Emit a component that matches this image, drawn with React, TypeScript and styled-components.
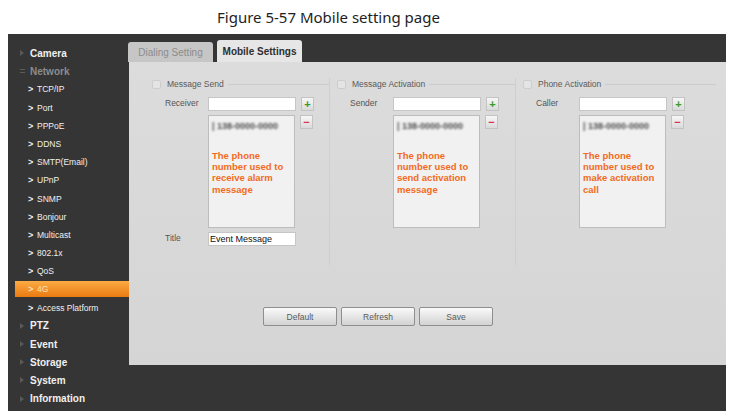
import React from 'react';
import styled, { createGlobalStyle } from 'styled-components';

const GlobalStyle = createGlobalStyle`
  html, body {
    margin: 0;
    padding: 0;
    background: #ffffff;
  }
  body {
    font-family: 'Liberation Sans', Arial, sans-serif;
  }
`;

const Page = styled.div`
  width: 738px;
  height: 414px;
  overflow: hidden;
`;

const Caption = styled.div`
  height: 34px;
  display: flex;
  align-items: center;
  padding-left: 217px;
  font-family: 'Noto Sans', 'Open Sans', sans-serif;
  font-size: 15px;
  color: #1e1e1e;
`;

const Screen = styled.div`
  margin-left: 8px;
  width: 718px;
  height: 377px;
  background: #353535;
  display: grid;
  grid-template-columns: 121px 1fr;
`;

const Sidebar = styled.nav`
  padding-top: 11px;
  display: flex;
  flex-direction: column;
  gap: 2.2px;
`;

const SideItem = styled.div<{ $sub?: boolean; $active?: boolean; $muted?: boolean }>`
  height: 16px;
  margin-left: 7px;
  display: flex;
  align-items: center;
  padding-left: ${p => (p.$sub ? '13px' : '5px')};
  font-size: ${p => (p.$sub ? '8.5px' : '10px')};
  font-weight: ${p => (p.$sub ? 'normal' : 'bold')};
  color: ${p => (p.$active ? '#ffe0b8' : p.$muted ? '#8c8c8c' : '#f0f0f0')};
  background: ${p => (p.$active ? 'linear-gradient(#fbab45, #ea7a10)' : 'transparent')};
`;

const Marker = styled.span<{ $open?: boolean }>`
  width: 5px;
  margin-right: 5px;
  display: inline-flex;
  align-items: center;
  &::before {
    content: '';
    display: block;
    ${p =>
      p.$open
        ? 'width: 5px; height: 2px; border-top: 1px solid #5c5c5c; border-bottom: 1px solid #5c5c5c;'
        : 'width: 0; height: 0; border-top: 3px solid transparent; border-bottom: 3px solid transparent; border-left: 4px solid #595959;'}
  }
`;

const Chevron = styled.span`
  width: 9px;
  font-weight: bold;
  font-size: 9px;
`;

const Main = styled.div`
  display: flex;
  flex-direction: column;
`;

const TabBar = styled.div`
  height: 28px;
  display: flex;
  align-items: flex-end;
  gap: 4px;
  margin-left: -1px;
`;

const Tab = styled.div<{ $active?: boolean }>`
  width: 85px;
  height: ${p => (p.$active ? '22px' : '20px')};
  border-radius: 3px 3px 0 0;
  display: flex;
  align-items: center;
  justify-content: center;
  font-size: 10px;
  font-weight: ${p => (p.$active ? 'bold' : 'normal')};
  color: ${p => (p.$active ? '#2e2e2e' : '#8c8c8c')};
  background: ${p => (p.$active ? '#e6e6e6' : '#c6c6c6')};
`;

const Panel = styled.section`
  height: 303px;
  background: linear-gradient(#dcdcdc, #d5d5d5);
  padding: 16px 6px 0 19px;
  box-sizing: border-box;
`;

const Columns = styled.div`
  height: 187px;
  display: grid;
  grid-template-columns: 185px 186px 1fr;
`;

const Fieldset = styled.div`
  margin-right: 3px;
  border-right: 1px solid #cfcfcf;
  display: flex;
  flex-direction: column;
  gap: 4px;
  &:last-child {
    border-right-color: transparent;
  }
`;

const Legend = styled.div`
  height: 12px;
  margin-bottom: 3px;
  display: flex;
  align-items: center;
  font-size: 8.5px;
  color: #5a5a5a;
`;

const Check = styled.span`
  width: 7px;
  height: 7px;
  margin: 0 6px 0 4px;
  border: 1px solid #cdcdcd;
  border-radius: 2px;
  background: #e4e4e4;
`;

const LegendLine = styled.span`
  flex: 1;
  height: 1px;
  margin-left: 4px;
  background: #cbcbcb;
`;

const Row = styled.div`
  display: flex;
  align-items: flex-start;
  padding-left: 17px;
  gap: 5px;
`;

const Label = styled.span`
  width: 38px;
  height: 14px;
  line-height: 12px;
  font-size: 8.5px;
  color: #555555;
`;

const TextBox = styled.div`
  width: 85px;
  height: 12px;
  border: 1px solid #c6c6c6;
  background: #ffffff;
  font-size: 9px;
  line-height: 12px;
  padding-left: 1px;
  color: #111111;
  box-sizing: content-box;
`;

const ListBox = styled.div`
  width: 79px;
  height: 103px;
  padding: 4px 3px;
  border: 1px solid #bdbdbd;
  background: #f1f1f1;
`;

const Entry = styled.div`
  height: 12px;
  font-size: 9px;
  font-weight: bold;
  line-height: 12px;
  color: #4a4a4a;
  filter: blur(0.9px);
  white-space: nowrap;
`;

const Note = styled.div`
  margin-top: 18px;
  font-size: 9.5px;
  line-height: 11.2px;
  font-weight: bold;
  color: #f26b21;
`;

const SideButton = styled.span<{ $minus?: boolean }>`
  width: 11px;
  height: 12px;
  border: 1px solid #c3c3c3;
  background: linear-gradient(#f7f7f7, #dadada);
  display: flex;
  align-items: center;
  justify-content: center;
  font-size: 11px;
  font-weight: bold;
  line-height: 1;
  color: ${p => (p.$minus ? '#d8344f' : '#3b9a2a')};
`;

const Actions = styled.div`
  margin-top: 42px;
  padding-left: 115px;
  display: flex;
  gap: 4px;
`;

const Button = styled.button`
  width: 74px;
  height: 19px;
  padding: 0;
  border: 1px solid #8e8e8e;
  border-radius: 2px;
  background: linear-gradient(#fafafa, #d2d2d2);
  font-family: 'Liberation Sans', Arial, sans-serif;
  font-size: 8.5px;
  color: #5a5a5a;
`;

const Footer = styled.div`
  flex: 1;
`;

type NavItem = { label: string; sub?: boolean; active?: boolean; muted?: boolean; open?: boolean };

const navItems: NavItem[] = [
  { label: 'Camera' },
  { label: 'Network', muted: true, open: true },
  { label: 'TCP/IP', sub: true },
  { label: 'Port', sub: true },
  { label: 'PPPoE', sub: true },
  { label: 'DDNS', sub: true },
  { label: 'SMTP(Email)', sub: true },
  { label: 'UPnP', sub: true },
  { label: 'SNMP', sub: true },
  { label: 'Bonjour', sub: true },
  { label: 'Multicast', sub: true },
  { label: '802.1x', sub: true },
  { label: 'QoS', sub: true },
  { label: '4G', sub: true, active: true },
  { label: 'Access Platform', sub: true },
  { label: 'PTZ' },
  { label: 'Event' },
  { label: 'Storage' },
  { label: 'System' },
  { label: 'Information' },
];

type Group = { title: string; field: string; entry: string; note: string[]; withTitle?: boolean };

const groups: Group[] = [
  {
    title: 'Message Send',
    field: 'Receiver',
    entry: '| 138-0000-0000',
    note: ['The phone', 'number used to', 'receive alarm', 'message'],
    withTitle: true,
  },
  {
    title: 'Message Activation',
    field: 'Sender',
    entry: '| 138-0000-0000',
    note: ['The phone', 'number used to', 'send activation', 'message'],
  },
  {
    title: 'Phone Activation',
    field: 'Caller',
    entry: '| 138-0000-0000',
    note: ['The phone', 'number used to', 'make activation', 'call'],
  },
];

const NumberGroup = ({ group }: { group: Group }) => (
  <Fieldset>
    <Legend>
      <Check />
      {group.title}
      <LegendLine />
    </Legend>
    <Row>
      <Label>{group.field}</Label>
      <TextBox />
      <SideButton>+</SideButton>
    </Row>
    <Row>
      <Label />
      <ListBox>
        <Entry>{group.entry}</Entry>
        <Note>
          {group.note.map(line => (
            <div key={line}>{line}</div>
          ))}
        </Note>
      </ListBox>
      <SideButton $minus>−</SideButton>
    </Row>
    {group.withTitle && (
      <Row>
        <Label>Title</Label>
        <TextBox>Event Message</TextBox>
      </Row>
    )}
  </Fieldset>
);

export default function App() {
  return (
    <Page>
      <GlobalStyle />
      <Caption>Figure 5-57 Mobile setting page</Caption>
      <Screen>
        <Sidebar>
          {navItems.map(item => (
            <SideItem key={item.label} $sub={item.sub} $active={item.active} $muted={item.muted}>
              {item.sub ? <Chevron>&gt;</Chevron> : <Marker $open={item.open} />}
              {item.label}
            </SideItem>
          ))}
        </Sidebar>
        <Main>
          <TabBar>
            <Tab>Dialing Setting</Tab>
            <Tab $active>Mobile Settings</Tab>
          </TabBar>
          <Panel>
            <Columns>
              {groups.map(group => (
                <NumberGroup key={group.title} group={group} />
              ))}
            </Columns>
            <Actions>
              <Button>Default</Button>
              <Button>Refresh</Button>
              <Button>Save</Button>
            </Actions>
          </Panel>
          <Footer />
        </Main>
      </Screen>
    </Page>
  );
}
